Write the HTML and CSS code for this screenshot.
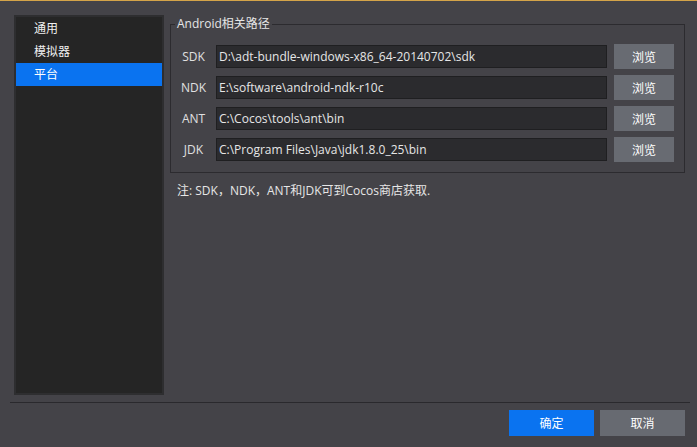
FILE: index.html
```html
<!DOCTYPE html>
<html lang="zh-CN">
<head>
<meta charset="utf-8">
<title>设置</title>
<link rel="stylesheet" href="styles.css">
</head>
<body>
<div class="window">
  <div class="main">
    <ul class="sidebar">
      <li class="nav-item">通用</li>
      <li class="nav-item">模拟器</li>
      <li class="nav-item active">平台</li>
    </ul>
    <div class="content">
      <fieldset class="group">
        <legend class="group-title">Android相关路径</legend>
        <div class="rows">
          <div class="row">
            <span class="label">SDK</span>
            <div class="field">D:\adt-bundle-windows-x86_64-20140702\sdk</div>
            <button class="btn btn-browse">浏览</button>
          </div>
          <div class="row">
            <span class="label">NDK</span>
            <div class="field">E:\software\android-ndk-r10c</div>
            <button class="btn btn-browse">浏览</button>
          </div>
          <div class="row">
            <span class="label">ANT</span>
            <div class="field">C:\Cocos\tools\ant\bin</div>
            <button class="btn btn-browse">浏览</button>
          </div>
          <div class="row">
            <span class="label">JDK</span>
            <div class="field">C:\Program Files\Java\jdk1.8.0_25\bin</div>
            <button class="btn btn-browse">浏览</button>
          </div>
        </div>
      </fieldset>
      <p class="note">注: SDK，NDK，ANT和JDK可到Cocos商店获取.</p>
    </div>
  </div>
  <div class="separator"></div>
  <div class="footer">
    <button class="btn btn-primary">确定</button>
    <button class="btn btn-secondary">取消</button>
  </div>
</div>
</body>
</html>
```

FILE: styles.css
```css
* {
  box-sizing: border-box;
}

html, body {
  margin: 0;
  padding: 0;
  background: #444348;
}

body {
  font-family: "Open Sans", "Noto Sans CJK SC", sans-serif;
  font-size: 12px;
  color: #e6e6e6;
}

.window {
  width: 697px;
  height: 447px;
  border-top: 1px solid #d4a449;
  background: #444348;
  display: flex;
  flex-direction: column;
}

.main {
  display: flex;
  gap: 6px;
  padding: 14px 12px 0 14px;
  height: 395px;
}

.sidebar {
  list-style: none;
  margin: 0;
  padding: 0;
  width: 150px;
  height: 380px;
  background: #252525;
  border: 2px solid #2e2e30;
}

.nav-item {
  height: 23px;
  line-height: 23px;
  padding-left: 18px;
  color: #f0f0f0;
}

.nav-item.active {
  background: #0a73f0;
  color: #ffffff;
}

.content {
  flex: 1;
  display: flex;
  flex-direction: column;
}

.group {
  margin: 0;
  padding: 0;
  border: 1px solid #2c2b2f;
  min-width: 0;
}

.group-title {
  margin-left: 4px;
  padding: 0 2px;
  line-height: 18px;
  color: #e6e6e6;
}

.rows {
  display: flex;
  flex-direction: column;
  gap: 6px;
  padding: 11px 10px 10px 0;
}

.row {
  display: grid;
  grid-template-columns: 45px 1fr 60px;
  column-gap: 7px;
  align-items: center;
  height: 25px;
}

.label {
  text-align: center;
  color: #e0e0e0;
}

.field {
  grid-column: 2;
  height: 23px;
  line-height: 21px;
  margin-left: -7px;
  padding-left: 2px;
  background: #2b2b2e;
  border: 1px solid #1f1f21;
  color: #e6e6e6;
  white-space: nowrap;
  overflow: hidden;
}

.btn {
  font-family: "Open Sans", "Noto Sans CJK SC", sans-serif;
  font-size: 12px;
  border: none;
  padding: 0;
  color: #ffffff;
  cursor: default;
}

.btn-browse {
  height: 25px;
  width: 60px;
  background: #686b72;
}

.note {
  margin: 9px 0 0 7px;
  line-height: 18px;
  color: #e6e6e6;
}

.separator {
  height: 1px;
  margin: 6px 7px 0 10px;
  background: #2a292d;
}

.footer {
  display: flex;
  justify-content: flex-end;
  gap: 6px;
  padding: 7px 12px 0 0;
}

.btn-primary,
.btn-secondary {
  width: 85px;
  height: 26px;
}

.btn-primary {
  background: #0a73f0;
}

.btn-secondary {
  background: #676a71;
}
```
